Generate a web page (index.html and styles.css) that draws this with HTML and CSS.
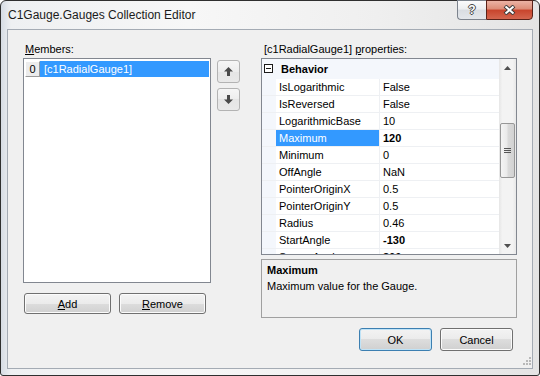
FILE: index.html
```html
<!DOCTYPE html>
<html>
<head>
<meta charset="utf-8">
<title>C1Gauge.Gauges Collection Editor</title>
<link rel="stylesheet" href="styles.css">
</head>
<body>
<div class="window">
  <div class="titlebar">
    <div class="title">C1Gauge.Gauges Collection Editor</div>
    <div class="caption">
      <div class="cap help">?</div>
      <div class="cap close">
        <svg width="13" height="10" viewBox="0 0 13 10"><path d="M2 1 L11 9 M11 1 L2 9" stroke="#3a3a3a" stroke-width="4"/><path d="M2.5 1.5 L10.5 8.5 M10.5 1.5 L2.5 8.5" stroke="#fff" stroke-width="2"/></svg>
      </div>
    </div>
  </div>
  <div class="client">
    <div class="main">
      <div class="members">
        <div class="label"><u>M</u>embers:</div>
        <div class="list">
          <div class="item"><span class="idx">0</span><span class="iname">[c1RadialGauge1]</span></div>
        </div>
        <div class="list-btns">
          <button class="btn"><u>A</u>dd</button>
          <button class="btn"><u>R</u>emove</button>
        </div>
      </div>
      <div class="arrows">
        <button class="arrow"><svg width="9" height="9" viewBox="0 0 9 9"><path d="M4.5 0 L9 4.5 H6 V9 H3 V4.5 H0 Z" fill="#4a4a4a"/></svg></button>
        <button class="arrow"><svg width="9" height="9" viewBox="0 0 9 9"><path d="M4.5 9 L9 4.5 H6 V0 H3 V4.5 H0 Z" fill="#4a4a4a"/></svg></button>
      </div>
      <div class="props">
        <div class="label">[c1RadialGauge1] <u>p</u>roperties:</div>
        <div class="grid">
          <div class="rows">
            <div class="cat">
              <svg class="toggle" width="9" height="9" viewBox="0 0 9 9"><rect x="0.5" y="0.5" width="8" height="8" fill="#fff" stroke="#1a1a1a"/><path d="M2 4.5 H7" stroke="#1a1a1a"/></svg>
              <span class="cat-name">Behavior</span>
            </div>
            <div class="row"><span class="gut"></span><span class="pn">IsLogarithmic</span><span class="pv">False</span></div>
            <div class="row"><span class="gut"></span><span class="pn">IsReversed</span><span class="pv">False</span></div>
            <div class="row"><span class="gut"></span><span class="pn">LogarithmicBase</span><span class="pv">10</span></div>
            <div class="row sel"><span class="gut"></span><span class="pn">Maximum</span><span class="pv bold">120</span></div>
            <div class="row"><span class="gut"></span><span class="pn">Minimum</span><span class="pv">0</span></div>
            <div class="row"><span class="gut"></span><span class="pn">OffAngle</span><span class="pv">NaN</span></div>
            <div class="row"><span class="gut"></span><span class="pn">PointerOriginX</span><span class="pv">0.5</span></div>
            <div class="row"><span class="gut"></span><span class="pn">PointerOriginY</span><span class="pv">0.5</span></div>
            <div class="row"><span class="gut"></span><span class="pn">Radius</span><span class="pv">0.46</span></div>
            <div class="row"><span class="gut"></span><span class="pn">StartAngle</span><span class="pv bold">-130</span></div>
            <div class="row"><span class="gut"></span><span class="pn">SweepAngle</span><span class="pv bold">360</span></div>
          </div>
          <div class="sb">
            <div class="sb-btn"><svg width="7" height="4" viewBox="0 0 7 4"><path d="M0 4 L3.5 0 L7 4 Z" fill="#505050"/></svg></div>
            <div class="track">
              <div class="thumb">
                <svg width="7" height="5" viewBox="0 0 7 5"><path d="M0 0.5 H7 M0 2.5 H7 M0 4.5 H7" stroke="#555"/></svg>
              </div>
            </div>
            <div class="sb-btn"><svg width="7" height="4" viewBox="0 0 7 4"><path d="M0 0 L3.5 4 L7 0 Z" fill="#505050"/></svg></div>
          </div>
        </div>
        <div class="desc">
          <div class="desc-title">Maximum</div>
          <div>Maximum value for the Gauge.</div>
        </div>
      </div>
    </div>
    <div class="footer">
      <button class="btn default">OK</button>
      <button class="btn">Cancel</button>
    </div>
    <div class="grip">
      <svg width="10" height="10" viewBox="0 0 10 10"><g fill="#b8b8b8"><rect x="8" y="0" width="2" height="2"/><rect x="5" y="3" width="2" height="2"/><rect x="8" y="3" width="2" height="2"/><rect x="2" y="6" width="2" height="2"/><rect x="5" y="6" width="2" height="2"/><rect x="8" y="6" width="2" height="2"/></g></svg>
    </div>
  </div>
</div>
</body>
</html>
```
FILE: styles.css
```css
body {
  margin: 0;
  font-family: "Liberation Sans", Arial, sans-serif;
  font-size: 11px;
  color: #000;
  background: #fff;
}

.window {
  width: 540px;
  height: 376px;
  box-sizing: border-box;
  border: 1px solid #2f2f2f;
  border-radius: 6px 6px 3px 3px;
  background: linear-gradient(90deg, #d6dce4 0px, #eef0f2 10px, #f7f7f7 35%, #efefef 70%, #e4e4e4 100%);
  display: flex;
  flex-direction: column;
}

.titlebar {
  height: 28px;
  display: flex;
  align-items: flex-start;
}

.title {
  padding: 6px 0 0 7px;
  font-size: 12px;
  line-height: 16px;
  color: #1b1b1b;
}

.caption {
  margin: -1px 6px 0 auto;
  display: flex;
}

.cap {
  height: 20px;
  box-sizing: border-box;
  display: flex;
  align-items: center;
  justify-content: center;
}

.help {
  width: 29px;
  border: 1px solid #7c838d;
  border-right: none;
  border-radius: 0 0 0 4px;
  background: linear-gradient(#fbfbfc, #eceef1 45%, #d9dde2 50%, #e4e7eb);
  color: #fff;
  font-weight: bold;
  font-size: 12px;
  text-shadow: -1px 0 #444, 1px 0 #444, 0 -1px #444, 0 1px #444;
}

.close {
  width: 47px;
  border: 1px solid #5a2219;
  border-radius: 0 0 4px 0;
  background: linear-gradient(#ebb3a5, #dc8c77 45%, #c8442c 50%, #d4664f);
}

.client {
  margin: 0 6px 6px;
  height: 340px;
  box-sizing: border-box;
  border: 1px solid #a4abb4;
  background: #f0f0f0;
  padding: 12px 15px 17px 15px;
  display: flex;
  flex-direction: column;
  position: relative;
}

.main {
  display: flex;
  height: 276px;
}

.members {
  width: 188px;
  display: flex;
  flex-direction: column;
}

.label {
  height: 16px;
  line-height: 14px;
  padding-left: 2px;
}

.list {
  height: 225px;
  box-sizing: border-box;
  border: 1px solid #828790;
  background: #fff;
  padding: 2px 1px 0;
}

.item {
  display: flex;
  height: 16px;
  line-height: 16px;
}

.idx {
  width: 15px;
  box-sizing: border-box;
  border: 1px solid;
  border-color: #fff #9a9a9a #9a9a9a #fff;
  background: #ececec;
  text-align: center;
  line-height: 14px;
}

.iname {
  flex: 1;
  background: #3399ff;
  color: #fff;
  padding-left: 4px;
}

.list-btns {
  display: flex;
  gap: 8px;
  margin-top: 10px;
  padding-left: 1px;
}

.btn {
  box-sizing: border-box;
  font: inherit;
  color: #000;
  padding: 0;
  border: 1px solid #707070;
  border-radius: 3px;
  background: linear-gradient(#f3f3f3 0%, #ebebeb 50%, #dddddd 50%, #d0d0d0 100%);
  box-shadow: inset 0 0 0 1px #fbfbfb;
}

.list-btns .btn {
  width: 87px;
  height: 21px;
}

.arrows {
  width: 23px;
  margin-left: 6px;
  padding-top: 18px;
  display: flex;
  flex-direction: column;
  gap: 5px;
}

.arrow {
  width: 23px;
  height: 23px;
  box-sizing: border-box;
  padding: 0;
  border: 1px solid #b3b3b3;
  border-radius: 3px;
  background: linear-gradient(#f6f6f6, #ededed 50%, #e5e5e5 50%, #e9e9e9);
  display: flex;
  align-items: center;
  justify-content: center;
}

.props {
  width: 256px;
  margin-left: 21px;
  display: flex;
  flex-direction: column;
}

.props .label {
  padding-left: 3px;
}

.grid {
  height: 197px;
  box-sizing: border-box;
  border: 1px solid #828790;
  background: #fff;
  display: flex;
}

.rows {
  flex: 1;
  overflow: hidden;
}

.cat {
  height: 20px;
  box-sizing: border-box;
  border-bottom: 1px solid #f4f7fc;
  background: #f4f7fc;
  display: flex;
  align-items: center;
  font-weight: bold;
}

.toggle {
  display: block;
  margin-left: 2px;
}

.cat-name {
  margin-left: 8px;
}

.row {
  display: flex;
  height: 17px;
  box-sizing: border-box;
  border-bottom: 1px solid #eef0f3;
  line-height: 16px;
  white-space: nowrap;
}

.gut {
  width: 14px;
  background: #f4f7fc;
}

.pn {
  width: 104px;
  box-sizing: border-box;
  padding-left: 3px;
  border-right: 1px solid #eef0f3;
}

.pv {
  flex: 1;
  padding-left: 3px;
}

.bold {
  font-weight: bold;
}

.row.sel .pn {
  background: #3399ff;
  color: #fff;
}

.sb {
  width: 17px;
  display: flex;
  flex-direction: column;
  background: linear-gradient(90deg, #e6e6e6, #f3f3f3 20%, #f3f3f3 80%, #e8e8e8);
}

.sb-btn {
  height: 17px;
  display: flex;
  align-items: center;
  justify-content: center;
}

.track {
  flex: 1;
}

.thumb {
  margin: 47px 1px 0;
  height: 55px;
  box-sizing: border-box;
  border: 1px solid #979797;
  border-radius: 2px;
  background: linear-gradient(90deg, #f4f4f4, #eaeaea 45%, #dadada 55%, #d2d2d2);
  display: flex;
  align-items: center;
  justify-content: center;
}

.desc {
  margin-top: 4px;
  height: 59px;
  box-sizing: border-box;
  border: 1px solid #a0a0a0;
  background: #f0f0f0;
  padding: 2px 5px;
  line-height: 16px;
}

.desc-title {
  font-weight: bold;
}

.footer {
  display: flex;
  justify-content: flex-end;
  gap: 8px;
  margin-top: 10px;
  padding-right: 4px;
}

.footer .btn {
  width: 73px;
  height: 23px;
}

.btn.default {
  border-color: #3c7fb1;
  box-shadow: inset 0 0 0 1px #bfe3f7;
}

.grip {
  position: absolute;
  right: 1px;
  bottom: 1px;
  width: 10px;
  height: 10px;
}
```
